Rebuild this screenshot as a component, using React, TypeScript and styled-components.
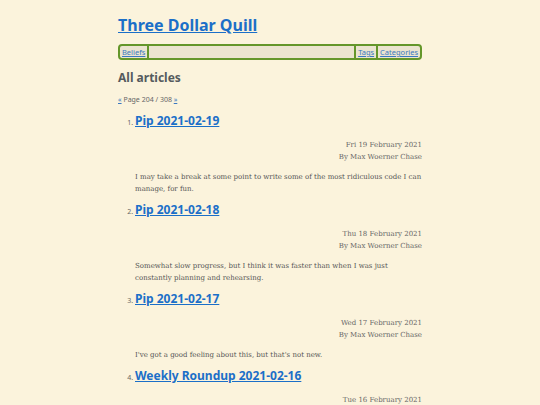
import styled, { createGlobalStyle } from "styled-components";

const GlobalStyle = createGlobalStyle`
  html, body {
    margin: 0;
    padding: 0;
    background: #fbf3dc;
  }
`;

const Page = styled.div`
  width: 304px;
  margin: 0 auto;
  padding-top: 13px;
  font-family: "DejaVu Serif", serif;
  color: #5a5a5a;
`;

const SiteTitle = styled.h1`
  margin: 0;
  font-family: "Noto Sans", sans-serif;
  font-size: 16px;
  line-height: 24px;
  font-weight: 700;

  a {
    color: #1b6fc8;
  }
`;

const Nav = styled.nav`
  margin-top: 7px;
  display: flex;
  align-items: stretch;
  height: 12px;
  border: 2px solid #64962a;
  border-radius: 4px;
  background: #ebe4cf;
  font-family: "Noto Sans", sans-serif;
  font-size: 7.5px;
  line-height: 12px;
`;

const NavLink = styled.a<{ $sep?: "left" | "right" }>`
  padding: 0 2px;
  color: #3a78c0;
  border-left: ${(p) => (p.$sep === "left" ? "2px solid #64962a" : "none")};
  border-right: ${(p) => (p.$sep === "right" ? "2px solid #64962a" : "none")};
`;

const NavFill = styled.div`
  flex: 1;
`;

const Heading = styled.h2`
  margin: 10px 0 0;
  font-family: "Noto Sans", sans-serif;
  font-size: 12px;
  line-height: 16px;
  font-weight: 700;
  color: #555b5e;
`;

const Pager = styled.div`
  margin-top: 9px;
  font-family: "Noto Sans", sans-serif;
  font-size: 7px;
  line-height: 10px;
  color: #666;

  a {
    color: #3a78c0;
  }
`;

const List = styled.ol`
  margin: 7px 0 0;
  padding-left: 17px;

  li::marker {
    font-family: "Noto Sans", sans-serif;
    font-size: 7px;
    color: #666;
  }
`;

const Item = styled.li`
  margin-bottom: 6px;
`;

const ItemTitle = styled.h3`
  margin: 0;
  font-family: "Noto Sans", sans-serif;
  font-size: 12px;
  line-height: 18px;
  font-weight: 700;

  a {
    color: #1b6fc8;
  }
`;

const Meta = styled.div`
  margin-top: 9px;
  text-align: right;
  font-size: 7px;
  line-height: 12px;
  color: #666;
`;

const Summary = styled.p`
  margin: 8px 0 0;
  font-size: 7px;
  line-height: 12px;
  color: #555;
`;

const articles = [
  {
    title: "Pip 2021-02-19",
    date: "Fri 19 February 2021",
    summary:
      "I may take a break at some point to write some of the most ridiculous code I can manage, for fun.",
  },
  {
    title: "Pip 2021-02-18",
    date: "Thu 18 February 2021",
    summary:
      "Somewhat slow progress, but I think it was faster than when I was just constantly planning and rehearsing.",
  },
  {
    title: "Pip 2021-02-17",
    date: "Wed 17 February 2021",
    summary: "I've got a good feeling about this, but that's not new.",
  },
  {
    title: "Weekly Roundup 2021-02-16",
    date: "Tue 16 February 2021",
    summary: "",
  },
];

export default function App() {
  return (
    <Page>
      <GlobalStyle />
      <SiteTitle>
        <a href="#">Three Dollar Quill</a>
      </SiteTitle>
      <Nav>
        <NavLink href="#" $sep="right">Beliefs</NavLink>
        <NavFill />
        <NavLink href="#" $sep="left">Tags</NavLink>
        <NavLink href="#" $sep="left">Categories</NavLink>
      </Nav>
      <Heading>All articles</Heading>
      <Pager>
        <a href="#">«</a> Page 204 / 308 <a href="#">»</a>
      </Pager>
      <List>
        {articles.map((a) => (
          <Item key={a.title}>
            <ItemTitle>
              <a href="#">{a.title}</a>
            </ItemTitle>
            <Meta>
              {a.date}
              <br />
              By Max Woerner Chase
            </Meta>
            {a.summary && <Summary>{a.summary}</Summary>}
          </Item>
        ))}
      </List>
    </Page>
  );
}
